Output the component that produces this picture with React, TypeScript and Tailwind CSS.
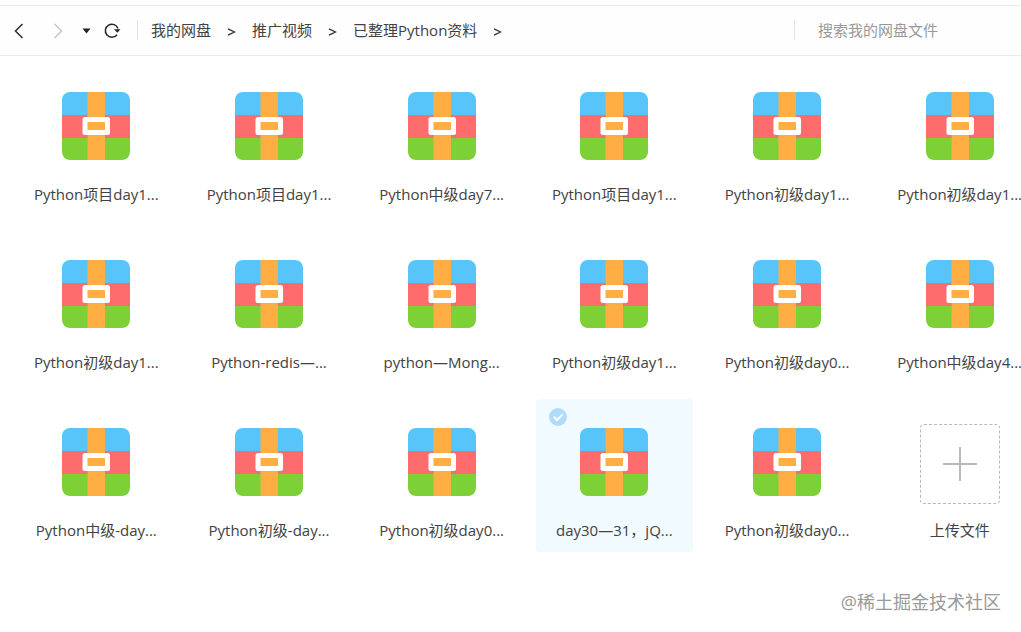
import React from 'react';

const crumbs = ['我的网盘', '推广视频', '已整理Python资料'];

const files = [
  { name: 'Python项目day1...' },
  { name: 'Python项目day1...' },
  { name: 'Python中级day7...' },
  { name: 'Python项目day1...' },
  { name: 'Python初级day1...' },
  { name: 'Python初级day1...' },
  { name: 'Python初级day1...' },
  { name: 'Python-redis—...' },
  { name: 'python—Mong...' },
  { name: 'Python初级day1...' },
  { name: 'Python初级day0...' },
  { name: 'Python中级day4...' },
  { name: 'Python中级-day...' },
  { name: 'Python初级-day...' },
  { name: 'Python初级day0...' },
  { name: 'day30—31，jQ...', active: true },
  { name: 'Python初级day0...' },
];

const ArchiveIcon: React.FC = () => (
  <svg className="w-[68px] h-[68px]" viewBox="0 0 68 68" aria-hidden="true">
    <clipPath id="archive-shape">
      <rect width="68" height="68" rx="8" />
    </clipPath>
    <g clipPath="url(#archive-shape)">
      <rect width="68" height="23" fill="#57c4fa" />
      <rect y="23" width="68" height="23" fill="#ff6c6e" />
      <rect y="46" width="68" height="22" fill="#7ed037" />
      <rect x="25.5" width="17.5" height="68" fill="#ffae44" />
    </g>
    <rect x="20.5" y="25" width="27.5" height="18" rx="2.5" fill="#fff" />
    <rect x="25.5" y="30" width="17.5" height="8" fill="#ffae44" />
  </svg>
);

const CheckBadge: React.FC = () => (
  <svg className="absolute left-[13px] top-[9px] w-[18px] h-[18px]" viewBox="0 0 18 18" aria-hidden="true">
    <circle cx="9" cy="9" r="9" fill="#aedcf9" />
    <path d="M4.8 8.8l3.2 3.2 5.6-5.6" fill="none" stroke="#fff" strokeWidth="2" />
  </svg>
);

const Toolbar: React.FC = () => (
  <header className="mt-[5px] flex h-[51px] items-center border-y border-[#ececec] bg-[#fefefe] pb-0.5">
    <nav className="flex items-center">
      <button aria-label="后退" className="ml-3 w-4 h-5">
        <svg className="w-4 h-5" viewBox="0 0 16 20" fill="none" stroke="#333" strokeWidth="1.6">
          <path d="M10.5 4L3.5 11l7 7" />
        </svg>
      </button>
      <button aria-label="前进" className="ml-6 w-4 h-5">
        <svg className="w-4 h-5" viewBox="0 0 16 20" fill="none" stroke="#c8c8c8" strokeWidth="1.6">
          <path d="M2.5 4l7 7-7 7" />
        </svg>
      </button>
      <button aria-label="历史记录" className="ml-3 w-4 h-5">
        <svg className="w-4 h-5" viewBox="0 0 16 20" fill="#222">
          <path d="M2.5 8.5h8l-4 5z" />
        </svg>
      </button>
      <button aria-label="刷新" className="ml-2 w-[18px] h-5">
        <svg className="w-[18px] h-5" viewBox="0 0 18 20">
          <path d="M13 14.7A6.5 6.5 0 1 1 14 8.6" fill="none" stroke="#222" strokeWidth="1.5" />
          <path d="M10 9.2h6.4l-3 3.6z" fill="#222" />
        </svg>
      </button>
      <span className="ml-[15px] mr-[13px] h-5 w-px bg-[#e4e4e4]" />
      <ol className="flex items-center">
        {crumbs.map((crumb) => (
          <li key={crumb} className="flex items-center">
            <a href="#" className="whitespace-nowrap">{crumb}</a>
            <svg className="mx-4 mt-1 w-[9px] h-2" viewBox="0 0 9 8" fill="none" stroke="#333" strokeWidth="1.3">
              <path d="M1 .8L7.5 4 1 7.2" />
            </svg>
          </li>
        ))}
      </ol>
    </nav>
    <div className="ml-auto flex w-[227px] items-center">
      <span className="h-5 w-px bg-[#e4e4e4]" />
      <input
        type="search"
        aria-label="搜索我的网盘文件"
        placeholder="搜索我的网盘文件"
        className="ml-[23px] w-full min-w-0 bg-transparent outline-none placeholder:text-[#999]"
      />
    </div>
  </header>
);

const App: React.FC = () => {
  return (
    <div className="relative min-h-screen overflow-hidden bg-white font-['Open_Sans','Noto_Sans_CJK_SC',sans-serif] text-[15px] leading-5 text-[#424242]">
      <Toolbar />

      <main className="-mr-[17px] grid grid-cols-6 gap-x-4 gap-y-[15px] pl-[18px] pt-[7px]">
        {files.map((file, index) => (
          <button
            key={index}
            className={`relative flex h-[153px] flex-col items-center rounded pt-[29px] ${file.active ? 'bg-[#f1faff]' : ''}`}
          >
            {file.active && <CheckBadge />}
            <ArchiveIcon />
            <span className="mt-6 whitespace-nowrap">{file.name}</span>
          </button>
        ))}
        <button className="flex h-[153px] flex-col items-center pt-[25px]">
          <span className="flex h-20 w-20 items-center justify-center rounded border border-dashed border-[#b8b8b8]">
            <svg className="w-[34px] h-[34px]" viewBox="0 0 34 34" stroke="#b8b8b8" strokeWidth="2" aria-hidden="true">
              <path d="M17 0v34M0 17h34" />
            </svg>
          </span>
          <span className="mt-4 whitespace-nowrap">上传文件</span>
        </button>
      </main>

      <p className="absolute bottom-4 right-5 text-lg leading-7 text-[#999]">@稀土掘金技术社区</p>
    </div>
  );
};

export default App;
